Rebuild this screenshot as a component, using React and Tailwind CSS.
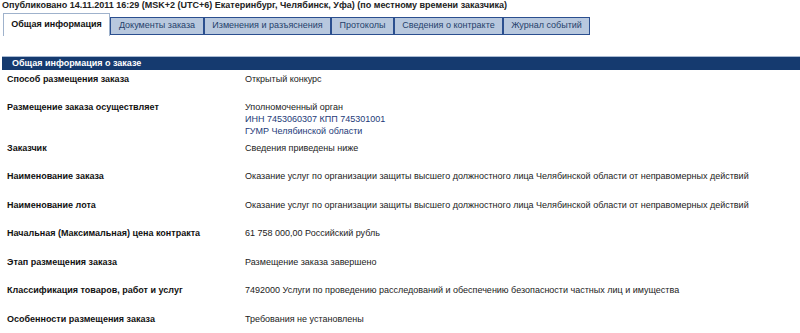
const tabs = [
  { label: "Общая информация", w: "w-[107px]", active: true },
  { label: "Документы заказа", w: "w-[94px]" },
  { label: "Изменения и разъяснения", w: "w-[127px]" },
  { label: "Протоколы", w: "w-[63px]" },
  { label: "Сведения о контракте", w: "w-[109px]" },
  { label: "Журнал событий", w: "w-[87px]" },
];

const rows = [
  { label: "Способ размещения заказа", value: ["Открытый конкурс"], h: "h-[27.5px]" },
  {
    label: "Размещение заказа осуществляет",
    value: ["Уполномоченный орган", "ИНН 7453060307 КПП 745301001", "ГУМР Челябинской области"],
    h: "h-[41px]",
    blue: true,
  },
  { label: "Заказчик", value: ["Сведения приведены ниже"], h: "h-[28.5px]" },
  {
    label: "Наименование заказа",
    value: ["Оказание услуг по организации защиты высшего должностного лица Челябинской области от неправомерных действий"],
    h: "h-[28.5px]",
  },
  {
    label: "Наименование лота",
    value: ["Оказание услуг по организации защиты высшего должностного лица Челябинской области от неправомерных действий"],
    h: "h-[28.5px]",
  },
  { label: "Начальная (Максимальная) цена контракта", value: ["61 758 000,00 Российский рубль"], h: "h-[28.5px]" },
  { label: "Этап размещения заказа", value: ["Размещение заказа завершено"], h: "h-[28.5px]" },
  {
    label: "Классификация товаров, работ и услуг",
    value: ["7492000 Услуги по проведению расследований и обеспечению безопасности частных лиц и имущества"],
    h: "h-[28.5px]",
  },
  { label: "Особенности размещения заказа", value: ["Требования не установлены"], h: "h-[28.5px]" },
];

export default function App() {
  return (
    <div className="w-[800px] h-[333px] overflow-hidden bg-white font-['Liberation_Sans',Arial,sans-serif] text-[9px] text-[#222] whitespace-nowrap">
      <div className="pl-[2px] h-[12px] leading-[11px] font-bold text-[#222]">
        Опубликовано 14.11.2011 16:29 (MSK+2 (UTC+6) Екатеринбург, Челябинск, Уфа) (по местному времени заказчика)
      </div>

      <div className="flex items-end pl-[3px] h-[24px]">
        {tabs.map((t) =>
          t.active ? (
            <div
              key={t.label}
              className={`${t.w} h-[23px] flex items-center justify-center bg-white border border-b-0 border-[#9fb2cc] font-bold text-[#111]`}
            >
              {t.label}
            </div>
          ) : (
            <div
              key={t.label}
              className={`${t.w} h-[18px] mb-[1px] flex items-center justify-center bg-[#b8c8de] border border-[#2b4f8f] text-[#253f6b]`}
            >
              {t.label}
            </div>
          )
        )}
      </div>

      <div className="mt-[20px] ml-[2px] border-t border-[#aabbd3] h-[14px] bg-[#153a6f] pl-[10px] leading-[13px] font-bold text-white">
        Общая информация о заказе
      </div>

      <div>
        {rows.map((r) => (
          <div key={r.label} className={`grid grid-cols-[245px_1fr] ${r.h}`}>
            <div className="pl-[7px] pt-[3px] leading-[13px] font-bold text-[#111]">{r.label}</div>
            <div className={`pt-[3px] ${r.value.length > 1 ? "leading-[12px]" : "leading-[13px]"}`}>
              {r.value.map((v, i) => (
                <div key={i} className={r.blue && i > 0 ? "text-[#1d3a78]" : "text-[#222]"}>
                  {v}
                </div>
              ))}
            </div>
          </div>
        ))}
      </div>
    </div>
  );
}
